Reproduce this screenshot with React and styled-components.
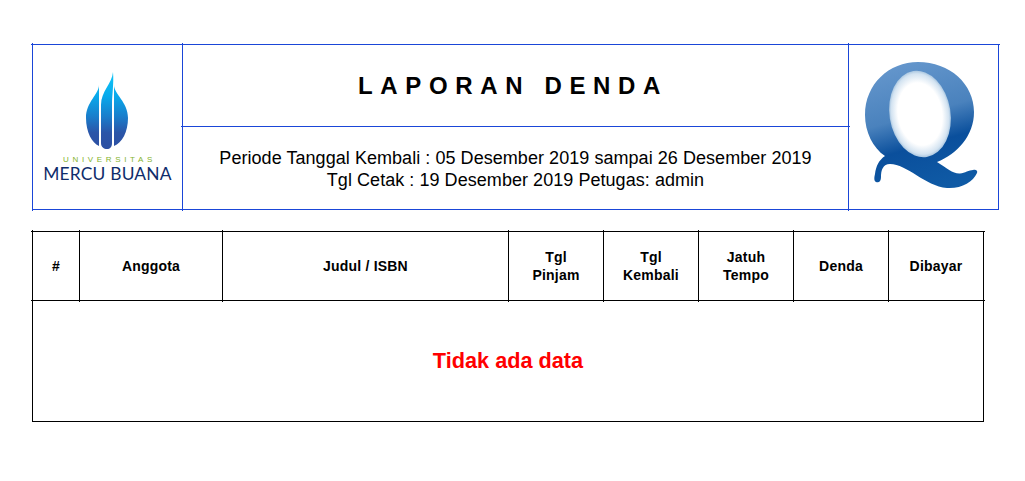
import styled, {createGlobalStyle, css} from "styled-components";

const columns = [
    {title: "#", width: 46},
    {title: "Anggota", width: 142},
    {title: "Judul / ISBN", width: 285},
    {title: ["Tgl", "Pinjam"], width: 94},
    {title: ["Tgl", "Kembali"], width: 94},
    {title: ["Jatuh", "Tempo"], width: 94},
    {title: "Denda", width: 94},
    {title: "Dibayar", width: 94},
];

const App = () => {
    return (
        <Page>
            <GlobalStyle/>
            <ReportHeader>
                <tbody>
                <tr>
                    <LogoCell rowSpan={2}>
                        <MercuLogo>
                            <FlameIcon/>
                            <Universitas>UNIVERSITAS</Universitas>
                            <MercuName>MERCU BUANA</MercuName>
                        </MercuLogo>
                    </LogoCell>
                    <TitleCell>LAPORAN DENDA</TitleCell>
                    <LogoCell rowSpan={2}>
                        <QIcon/>
                    </LogoCell>
                </tr>
                <tr>
                    <PeriodCell>
                        Periode Tanggal Kembali : 05 Desember 2019 sampai 26 Desember 2019<br/>
                        Tgl Cetak : 19 Desember 2019 Petugas: admin
                    </PeriodCell>
                </tr>
                </tbody>
            </ReportHeader>
            <DataTable>
                <thead>
                <tr>
                    {columns.map((col, index) =>
                        <HeadCell key={index} $width={col.width}>
                            {Array.isArray(col.title) ? <>{col.title[0]}<br/>{col.title[1]}</> : col.title}
                        </HeadCell>)
                    }
                </tr>
                </thead>
                <tbody>
                <tr>
                    <EmptyCell colSpan={columns.length}>Tidak ada data</EmptyCell>
                </tr>
                </tbody>
            </DataTable>
        </Page>
    );
}

const FlameIcon = () => (
    <FlameSvg width="44" height="78" viewBox="0 0 44 78">
        <defs>
            <linearGradient id="flame" gradientUnits="userSpaceOnUse" x1="0" y1="0" x2="0" y2="78">
                <stop offset="0" stopColor="#10c6f7"/>
                <stop offset="0.3" stopColor="#08aaec"/>
                <stop offset="0.58" stopColor="#1a7cca"/>
                <stop offset="0.78" stopColor="#2b55a8"/>
                <stop offset="1" stopColor="#2c4fa2"/>
            </linearGradient>
        </defs>
        <path fill="url(#flame)"
              d="M14 13 C14 22 1 30 1 46 C1 60 7 71 14 74 L14 13 Z"/>
        <path fill="url(#flame)"
              d="M28 0 C27 12 16 19 16 33 L16 71 C16 75 19 77 22 77 C25 77 27 75 27 71 L27 33 C27 22 29 12 28 0 Z"/>
        <path fill="url(#flame)"
              d="M29 13 C29 22 43 30 43 46 C43 60 37 71 29 74 L29 13 Z"/>
    </FlameSvg>
);

const QIcon = () => (
    <QSvg width="118" height="130" viewBox="0 0 118 130">
        <defs>
            <linearGradient id="qBody" x1="0.35" y1="0" x2="0.6" y2="1">
                <stop offset="0" stopColor="#6496cc"/>
                <stop offset="0.42" stopColor="#4a82bd"/>
                <stop offset="0.66" stopColor="#0a4f9c"/>
                <stop offset="1" stopColor="#0f5aa5"/>
            </linearGradient>
            <radialGradient id="qHole" cx="0.5" cy="0.5" r="0.5">
                <stop offset="0.72" stopColor="#ffffff"/>
                <stop offset="0.93" stopColor="#d3e3f1"/>
                <stop offset="1" stopColor="#a9c6e0"/>
            </radialGradient>
        </defs>
        <path fill="url(#qBody)"
              d="M53 0 C85 0 109 22 109 50 C109 74 92 92 72 100 C82 106 88 112 95 111.5 C100 111 104 108 108 108 C111 107 113 109 112 111 C108 120 96 127 82 126 C60 124 42 102 25 102 C18 102 16 108 16 115 C16 120 13 121 11 120 C9 119 9 116 10 112 C11 104 14 98 20 94 C8 86 0 70 0 53 C0 22 24 0 53 0 Z"/>
        <ellipse fill="url(#qHole)" cx="55" cy="52" rx="30.5" ry="43.5" transform="rotate(-9 55 52)"/>
    </QSvg>
);

const GlobalStyle = createGlobalStyle`
  body {
    margin: 0;
    background-color: #ffffff;
    font-family: "Liberation Sans", Arial, sans-serif;
    color: #000000;
  }
`;

// the lines of the printed report run a little past each crossing
const lineTicks = (color) => css`
  position: relative;

  &::before {
    content: "";
    position: absolute;
    left: -1px;
    top: -2px;
    bottom: -2px;
    width: 1px;
    background-color: ${color};
  }

  &::after {
    content: "";
    position: absolute;
    top: -1px;
    left: -2px;
    right: -2px;
    height: 1px;
    background-color: ${color};
  }
`;

const Page = styled.div`
  padding: 44px 0 0 32px;
  display: flex;
  flex-direction: column;
  align-items: flex-start;
  gap: 21px;
`;

const ReportHeader = styled.table`
  border-collapse: collapse;
  table-layout: fixed;
  width: 967px;

  td {
    border: 1px solid #1a46d8;
    padding: 0;
    text-align: center;
    vertical-align: middle;
    ${lineTicks("#1a46d8")}
  }
`;

const LogoCell = styled.td`
  width: 149px;
  height: 163px;
`;

const MercuLogo = styled.div`
  display: flex;
  flex-direction: column;
  align-items: center;
  padding-top: 1px;
`;

const FlameSvg = styled.svg`
  display: block;
  margin-left: -1px;
`;

const QSvg = styled.svg`
  display: block;
  margin: 0 auto;
`;

const Universitas = styled.div`
  font-size: 8px;
  line-height: 9px;
  letter-spacing: 3.65px;
  margin-right: -4px;
  margin-top: 5px;
  color: #84b32e;
`;

const MercuName = styled.div`
  font-family: Lato, sans-serif;
  font-size: 17.4px;
  line-height: 20px;
  letter-spacing: 0.2px;
  white-space: nowrap;
  color: #0f2c6b;
`;

const TitleCell = styled.td`
  height: 81px;
  font-size: 24px;
  font-weight: bold;
  letter-spacing: 7.65px;
  text-indent: -5px;
`;

const PeriodCell = styled.td`
  height: 80px;
  font-size: 18px;
  line-height: 22px;
  letter-spacing: 0.05px;
  && {
    padding-top: 2px;
  }
`;

const DataTable = styled.table`
  border-collapse: collapse;
  table-layout: fixed;
  width: 952px;
`;

const HeadCell = styled.th`
  width: ${({$width}) => $width}px;
  height: 68px;
  padding: 0;
  border: 1px solid #000000;
  font-size: 14px;
  line-height: 18px;
  letter-spacing: 0.2px;
  ${lineTicks("#000000")}
`;

const EmptyCell = styled.td`
  height: 120px;
  padding: 0;
  border: 1px solid #000000;
  text-align: center;
  color: #ff0000;
  font-size: 21.7px;
  font-weight: bold;
  ${lineTicks("#000000")}
`;

export default App;
